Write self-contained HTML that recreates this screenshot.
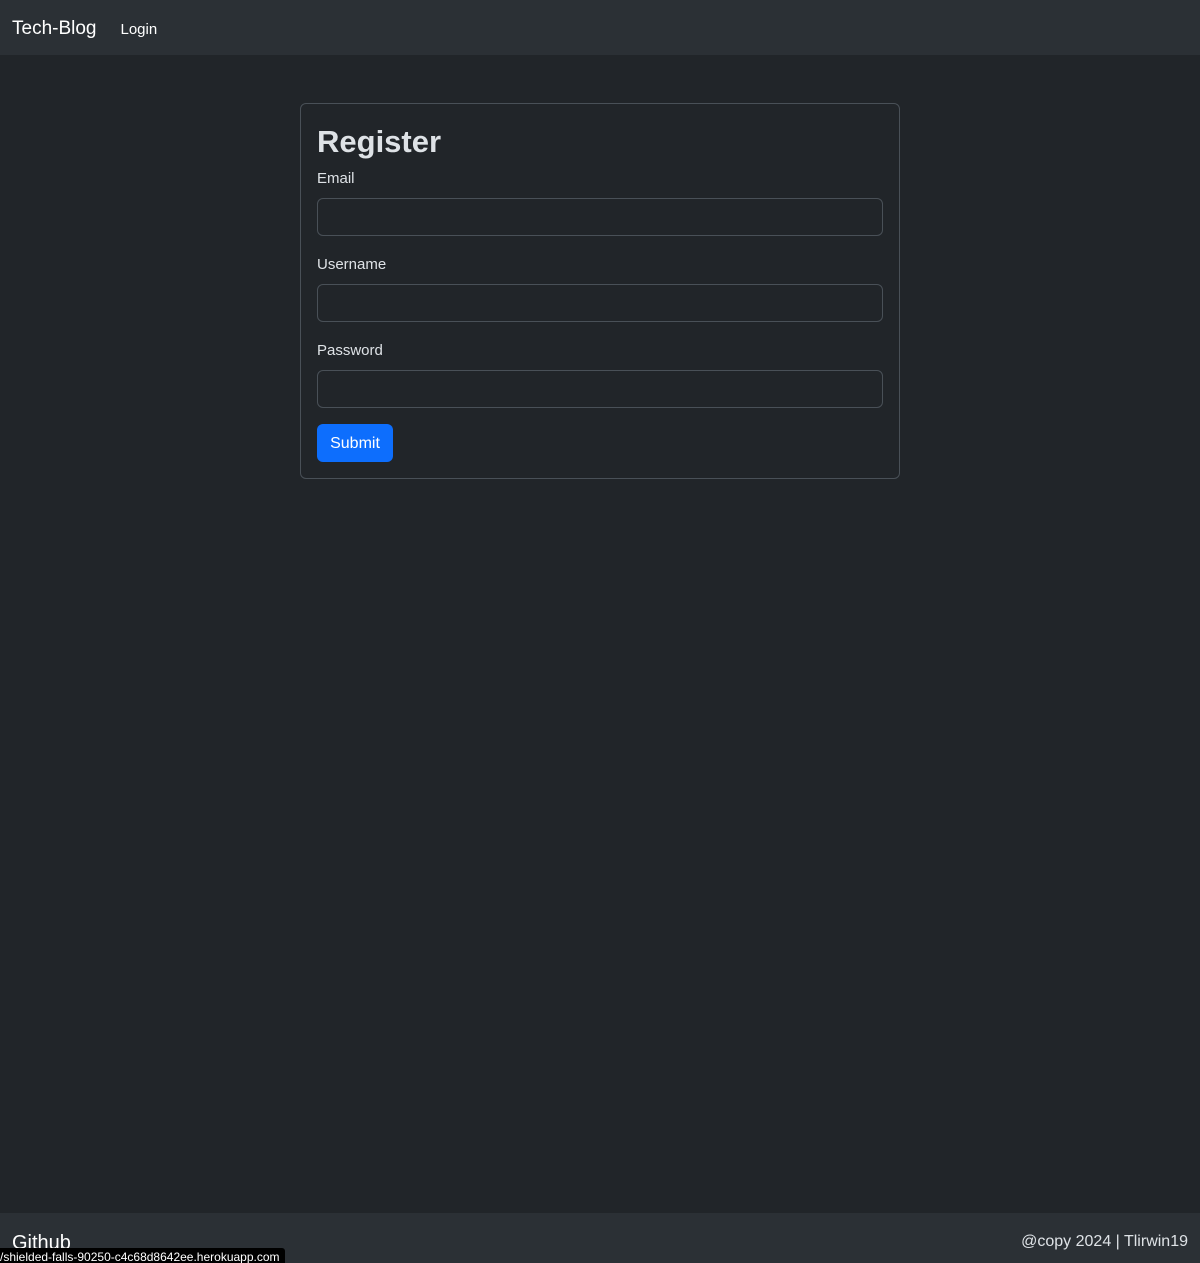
<!DOCTYPE html>
<html><head><meta charset="utf-8"><style>
*{box-sizing:border-box;margin:0;padding:0}
body{width:1200px;height:1263px;background:#212529;font-family:"Liberation Sans",sans-serif;color:#dee2e6;position:relative;overflow:hidden}
nav{height:55px;background:#2b3035;display:flex;align-items:center;padding-left:12px;padding-top:3px}
.brand{font-size:19px;color:#fff;margin-right:24px}
.nl{font-size:15px;color:#fff}
.card{position:absolute;left:300px;top:103px;width:600px;height:376px;border:1px solid #495057;border-radius:6px;padding:0 16px}
h1{font-size:31px;font-weight:bold;margin-top:20px;line-height:36px;color:#dee2e6}
label{display:block;font-size:15px;line-height:18px;height:18px}
.first{margin-top:10px}
.in{height:38px;border:1px solid #495057;border-radius:6px;margin-top:10px;background:#212529}
.g{margin-top:20px}
.btn{position:absolute;left:16px;top:320px;width:76px;height:38px;background:#0d6efd;color:#fff;border-radius:6px;font-size:16px;display:flex;align-items:center;justify-content:center;padding-top:2px}
footer{position:absolute;left:0;top:1213px;width:1200px;height:50px;background:#2b3035}
.gh{position:absolute;left:12px;top:19px;font-size:20px;color:#fff}
.cp{position:absolute;right:12px;top:20px;font-size:16px;color:#dee2e6}
.tip{position:absolute;left:0;top:1248px;height:15px;width:285px;background:#000;color:#fff;font-size:12px;line-height:19px;border-top-right-radius:3px;white-space:nowrap;overflow:hidden}
</style></head><body>
<nav><span class="brand">Tech-Blog</span><span class="nl">Login</span></nav>
<div class="card">
<h1>Register</h1>
<label class="first">Email</label><div class="in"></div>
<label class="g">Username</label><div class="in"></div>
<label class="g">Password</label><div class="in"></div>
<div class="btn">Submit</div>
</div>
<footer><span class="gh">Github</span><span class="cp">@copy 2024 | Tlirwin19</span></footer>
<div class="tip">/shielded-falls-90250-c4c68d8642ee.herokuapp.com</div>
</body></html>
